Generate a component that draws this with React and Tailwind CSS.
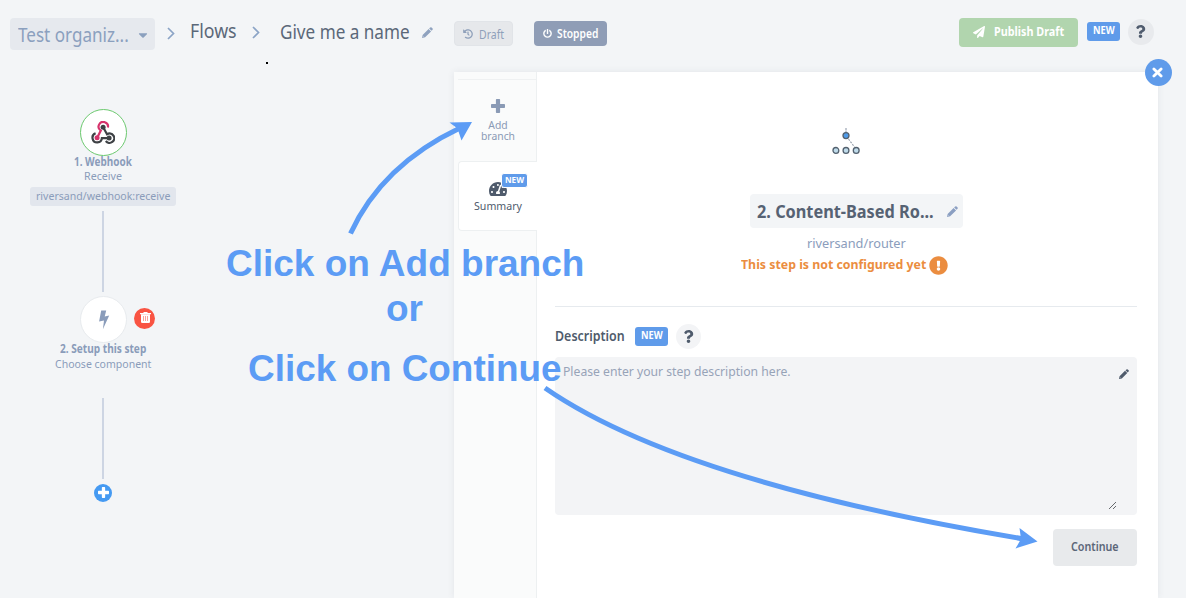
import { useLayoutEffect, useRef } from "react";
import {
  FaHistory, FaPowerOff, FaPaperPlane, FaQuestion,
  FaTachometerAlt, FaExclamationCircle, FaCaretDown,
} from "react-icons/fa";

// Condenses its text horizontally so that it fills the width set in className.
function Fit({ className = "", children }) {
  const outer = useRef(null);
  const inner = useRef(null);
  useLayoutEffect(() => {
    const fit = () => {
      if (!inner.current) return;
      const k = outer.current.clientWidth / inner.current.offsetWidth;
      inner.current.style.transform = `scaleX(${k})`;
    };
    fit();
    document.fonts?.ready.then(fit);
  }, []);
  return (
    <span ref={outer} className={`block shrink-0 ${className}`}>
      <span ref={inner} className="inline-block origin-left whitespace-nowrap align-top">{children}</span>
    </span>
  );
}

function NewBadge({ className = "" }) {
  return (
    <span className={`flex h-[19px] w-[33px] shrink-0 justify-center rounded-[3px] bg-[#5f9bea] text-[10.5px] font-bold leading-[17px] text-white ${className}`}>
      <Fit className="w-[22px]">NEW</Fit>
    </span>
  );
}

function Chevron({ className = "" }) {
  return (
    <svg viewBox="0 0 8 13" className={`h-[13px] w-2 shrink-0 fill-none stroke-[#8ba4c6] ${className}`} strokeWidth="1.7">
      <path d="M1 1l5.5 5.5L1 12" />
    </svg>
  );
}

function Pencil({ className = "" }) {
  return (
    <svg viewBox="0 0 12 12" className={`shrink-0 fill-current ${className}`}>
      <path d="M7.800 1.600L8.900 .5Q9.700 -.2 10.500 .5L11.500 1.500Q12.200 2.300 11.500 3.100L10.400 4.200z" />
      <path fillRule="evenodd" d="M7.200 2.100L9.900 4.800L3.400 11.300L0 12L.7 8.600zM1.700 9.700L1.400 10.600L2.300 10.300z" />
    </svg>
  );
}

function Plus({ className = "" }) {
  return (
    <svg viewBox="0 0 14 14" className={`fill-current ${className}`}>
      <path d="M5.700 0h2.600q.8 0 .8.800V4.900h4.100q.8 0 .8.800v2.600q0 .8-.8.800H9.100v4.100q0 .8-.8.800H5.700q-.8 0-.8-.8V9.100H.8q-.8 0-.8-.8V5.700q0-.8.8-.8h4.100V.8q0-.8.8-.8z" />
    </svg>
  );
}

function Cross({ className = "" }) {
  return (
    <svg viewBox="0 0 11 11" className={`fill-none stroke-current ${className}`} strokeWidth="2.800" strokeLinecap="round">
      <path d="M1.900 1.900L9.100 9.100M9.100 1.900L1.900 9.100" />
    </svg>
  );
}

function WebhookLogo() {
  return (
    <svg viewBox="0 0 24 23" className="h-[23px] w-6 fill-none" strokeWidth="2.2">
      <path d="M16.900 6.600A4.700 4.700 0 1 0 9.800 9.600L6.300 16.600" stroke="#d6336c" />
      <path d="M12.200 6.300L16 13.200A4.700 4.700 0 1 1 14.800 20" stroke="#3e4145" />
      <path d="M4.600 12.300A4.700 4.700 0 1 0 10.900 17.100H18" stroke="#3e4145" />
      <circle cx="12.100" cy="6.300" r="2.500" fill="#3e4145" />
      <circle cx="6.100" cy="16.800" r="2.500" fill="#d6336c" />
      <circle cx="18.100" cy="16.900" r="2.500" fill="#3e4145" />
    </svg>
  );
}

function RouterLogo() {
  return (
    <svg viewBox="0 0 28 28" className="h-7 w-7 fill-none">
      <path d="M14 0v4" stroke="#aeb6c2" strokeWidth="1.5" strokeDasharray="2 .6" />
      <path d="M16.500 11l6 8" stroke="#98a1ad" strokeWidth="1.100" strokeDasharray="2 1.200" />
      <g stroke="#53616f" strokeWidth="1.300">
        <circle cx="14" cy="7.600" r="3" fill="#4f9be8" />
        <g fill="#bfdbea">
          <circle cx="3.900" cy="22.400" r="2.900" />
          <circle cx="14" cy="22.400" r="2.900" />
          <circle cx="24.200" cy="22.400" r="2.900" />
        </g>
      </g>
    </svg>
  );
}

function Header() {
  return (
    <header className="flex h-[71px] shrink-0 items-start text-xl leading-7 text-[#5b6879]">
      <div className="ml-[10px] mt-[18px] flex h-8 w-[145px] items-center rounded bg-[#e6e9ee] pl-2 text-[#8ba0be]">
        <Fit className="mt-0.5 w-[111px]">Test organiz...</Fit>
        <FaCaretDown className="ml-[7px] mt-0.5 h-[14px] w-[14px]" />
      </div>
      <Chevron className="ml-3 mt-[27px]" />
      <Fit className="ml-[15px] mt-[17px] w-[47px]">Flows</Fit>
      <Chevron className="ml-[15px] mt-[26px]" />
      <Fit className="ml-[20px] mt-[18px] w-[130px]">Give me a name</Fit>
      <Pencil className="ml-[12px] mt-[27px] h-[11px] w-[11px] text-[#8fa2bf]" />
      <div className="ml-[21px] mt-[21px] flex h-[25px] w-[59px] shrink-0 items-center rounded-[4px] border border-[#e1e4e8] bg-[#e6e8eb] pl-2 text-[13px] text-[#8fa0ba]">
        <FaHistory className="h-[10px] w-[10px]" />
        <Fit className="ml-[6px] w-[25px]">Draft</Fit>
      </div>
      <div className="ml-[21px] mt-[21px] flex h-[25px] w-[73px] shrink-0 items-center rounded-[4px] bg-[#8f9db6] pl-[9px] text-[12.5px] font-semibold text-white">
        <FaPowerOff className="h-[9px] w-[9px]" />
        <Fit className="ml-[5px] w-[41px]">Stopped</Fit>
      </div>
      <div className="ml-auto mt-[18px] flex h-[29px] w-[119px] shrink-0 items-center rounded-[4px] bg-[#b1d5ae] pl-[14px] text-[12.5px] font-bold text-white">
        <FaPaperPlane className="-mt-0.5 h-3 w-3" />
        <Fit className="-mt-px ml-[9px] w-[70px]">Publish Draft</Fit>
      </div>
      <NewBadge className="ml-[9px] mt-[22px]" />
      <div className="ml-2 mr-8 mt-[19px] flex h-[26px] w-[26px] shrink-0 items-center justify-center rounded-full bg-[#e8eaed]">
        <FaQuestion className="-ml-px -mt-px h-[13px] w-[13px] text-[#505c6e]" />
      </div>
    </header>
  );
}

function Flow() {
  return (
    <section className="flex w-[206px] shrink-0 flex-col items-center pt-[38px] text-[11.5px] leading-[14px] text-[#8a9cba]">
      <div className="flex h-[47px] w-[47px] items-center justify-center rounded-full border border-[#6cc96f] bg-white">
        <WebhookLogo />
      </div>
      <Fit className="-mt-px w-[58px] font-bold">1. Webhook</Fit>
      <Fit className="w-[38px]">Receive</Fit>
      <div className="mt-[4px] flex h-[19px] w-[146px] items-center justify-center rounded-[3px] bg-[#e2e6ed]">
        <Fit className="-mt-px w-[134px]">riversand/webhook:receive</Fit>
      </div>
      <div className="mt-[5px] h-[81px] w-[2px] bg-[#cdd5e3]" />
      <div className="mt-[4px] grid w-[206px] grid-cols-[1fr_47px_1fr] items-center">
        <span />
        <div className="flex h-[47px] w-[47px] items-center justify-center rounded-full border border-[#e8ebee] bg-white">
          <svg viewBox="0 0 12 20" className="ml-0.5 h-[20px] w-3 fill-[#8a9cba]">
            <path d="M3.200 0.500h5L6.700 6.400l4.500-1L4.900 19.200 6 10.400l-4.900 1z" />
          </svg>
        </div>
        <div className="-mt-[2px] ml-[7.5px] flex h-[21px] w-[21px] items-center justify-center rounded-full bg-[#f95443]">
          <svg viewBox="0 0 11 11" className="-mt-0.5 ml-px h-[11px] w-[11px] fill-white">
            <path d="M3.500 0h4v1H11v1.300H0V1h3.500z" />
            <path d="M1 2.300h9V9.800Q10 11 8.800 11H2.200Q1 11 1 9.800z" />
            <path d="M3.500 4v5M5.500 4v5M7.500 4v5" stroke="#fa8b80" strokeWidth=".8" />
          </svg>
        </div>
      </div>
      <Fit className="-mt-px w-[86px] font-bold">2. Setup this step</Fit>
      <Fit className="mt-px w-[96px]">Choose component</Fit>
      <div className="mt-[27px] h-[81px] w-[2px] bg-[#cdd5e3]" />
      <div className="mt-[4.5px] flex h-[18px] w-[18px] items-center justify-center rounded-full bg-[#459af2]">
        <Plus className="-mt-px h-[11px] w-[11px] text-white" />
      </div>
    </section>
  );
}

function Sidebar() {
  return (
    <nav className="flex w-[83px] shrink-0 flex-col border-r border-[#edf0f1] bg-[#fafbfb] pl-[4px] pt-[7px] text-[11.5px] leading-[11px]">
      <div className="flex h-[82px] flex-col items-center border-t border-[#eff1f2] pl-[2px] pt-[19px] text-[#8a9ab5]">
        <Plus className="h-[14px] w-[14px]" />
        <div className="mt-[6px] w-[38px] scale-x-[.9] text-center">Add branch</div>
      </div>
      <div className="relative -mr-px flex h-[70px] flex-col items-center rounded-l-[4px] border border-r-0 border-[#edf0f1] bg-white pt-[18px] text-[#4f5b6c]">
        <FaTachometerAlt className="h-[18px] w-[18px]" />
        <Fit className="mt-[2px] w-[48px]">Summary</Fit>
        <span className="absolute left-[42px] top-[11px] flex h-[15px] w-[27px] justify-center rounded-[3px] border border-white bg-[#5f9bea] text-[9px] font-bold leading-[12px] text-white">
          <Fit className="w-[19px]">NEW</Fit>
        </span>
      </div>
    </nav>
  );
}

function StepPanel() {
  return (
    <section className="relative ml-[248px] mt-px flex w-[704px] shrink-0 bg-white shadow-[0_0_7px_rgba(60,70,90,0.09)]">
      <Sidebar />
      <div className="flex flex-1 flex-col pl-[18px] pr-[21px]">
        <div className="flex flex-col items-center pt-[56px]">
          <RouterLogo />
          <div className="ml-[21px] mt-[38px] flex h-[34px] w-[213px] items-center rounded-[4px] bg-[#f3f5f7] pl-[7px] text-[18.5px] font-bold text-[#566273]">
            <Fit className="w-[177px]">2. Content-Based Ro...</Fit>
            <Pencil className="ml-[13px] h-[11px] w-[11px] text-[#8b9fc2]" />
          </div>
          <Fit className="ml-[21px] mt-[5px] w-[99px] text-[13px] leading-5 text-[#8b9dbc]">riversand/router</Fit>
          <div className="-ml-[4px] mt-[2px] flex h-5 items-center text-[13px] font-bold text-[#eb8d40]">
            <Fit className="w-[185px]">This step is not configured yet</Fit>
            <FaExclamationCircle className="ml-[3px] h-[19px] w-[19px]" />
          </div>
        </div>
        <hr className="mt-[31px] border-[#e6eaee]" />
        <div className="mt-[17px] flex h-[25px] items-center text-[13.5px] font-semibold text-[#4f5b6c]">
          <Fit className="w-[70px]">Description</Fit>
          <NewBadge className="ml-[10px]" />
          <div className="ml-2 flex h-[25px] w-[25px] items-center justify-center rounded-full bg-[#f3f4f6]">
            <FaQuestion className="-mt-px h-[13px] w-[13px]" />
          </div>
        </div>
        <div className="mt-[8px] flex h-[158px] rounded-[4px] bg-[#f3f4f6] pl-2 pt-[5px] text-[12.5px] leading-5 text-[#97a3b8]">
          <Fit className="w-[228px]">Please enter your step description here.</Fit>
          <div className="ml-auto flex w-[28px] flex-col justify-between pb-[5px] pt-[7px]">
            <Pencil className="ml-[10px] h-[10px] w-[10px] text-[#4f5b6c]" />
            <svg viewBox="0 0 9 9" className="-ml-px h-[9px] w-[9px] stroke-[#66696d]">
              <path d="M1 8l7-7M5 8l3-3" />
            </svg>
          </div>
        </div>
        <div className="ml-auto mt-[14px] flex h-[37px] w-[84px] items-center justify-center rounded-[4px] bg-[#e8eaec] text-[12.5px] font-semibold text-[#5b6678]">
          <Fit className="w-[48px]">Continue</Fit>
        </div>
      </div>
      <div className="absolute left-[690.5px] top-[-13px] flex h-[27px] w-[27px] items-center justify-center rounded-full bg-[#5f9bea]">
        <Cross className="-ml-px h-[11px] w-[11px] text-white" />
      </div>
    </section>
  );
}

function Annotations() {
  return (
    <div className="pointer-events-none absolute inset-0 font-['Liberation_Sans',sans-serif] text-[37px] font-bold leading-10 text-[#5c9cf5]">
      <svg viewBox="0 0 1186 598" className="absolute inset-0 h-full w-full fill-none stroke-[#5c9cf5]" strokeWidth="5">
        <path d="M350.500 233.500Q382 165 460 128" />
        <path d="M545 388C620 440 760 495 1024 539" />
        <g className="fill-[#5c9cf5] stroke-none">
          <path d="M472 122L449.500 122.500L457.500 128.500L461.500 140.500z" />
          <path d="M1037.500 541.500L1019.500 528L1021 539L1015.500 548.500z" />
        </g>
      </svg>
      <Fit className="absolute left-[226px] top-[244px] w-[358px]">Click on Add branch</Fit>
      <Fit className="absolute left-[386px] top-[289px] w-[37px]">or</Fit>
      <Fit className="absolute left-[248px] top-[349px] w-[314px]">Click on Continue</Fit>
      <span className="absolute left-[266px] top-[62px] h-[2px] w-[2px] bg-black" />
    </div>
  );
}

export default function App() {
  return (
    <main className="relative flex h-[598px] w-[1186px] flex-col overflow-hidden bg-[#f3f5f7] font-['Noto_Sans',sans-serif]">
      <Header />
      <div className="flex flex-1">
        <Flow />
        <StepPanel />
      </div>
      <Annotations />
    </main>
  );
}
